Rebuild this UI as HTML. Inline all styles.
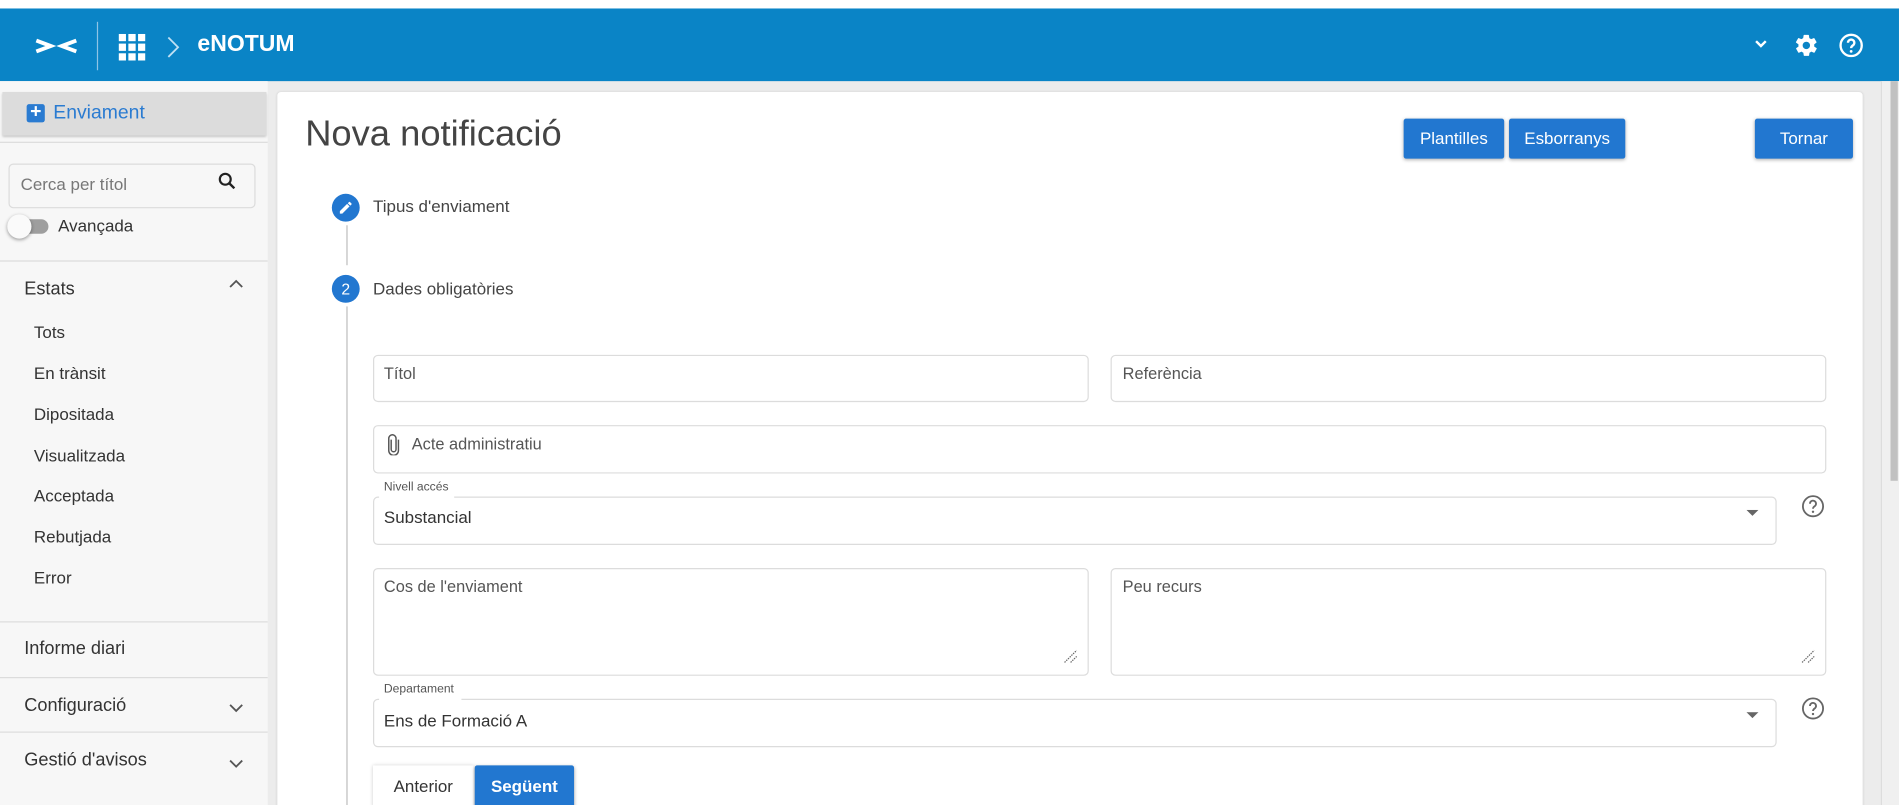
<!DOCTYPE html>
<html><head><meta charset="utf-8"><style>
*{box-sizing:border-box;margin:0;padding:0}
html,body{width:1899px;height:805px;overflow:hidden;background:#fff;font-family:"Liberation Sans",sans-serif}
#w{position:absolute;left:0;top:0;width:1568px;height:665px;transform:scale(1.21109);transform-origin:0 0;background:#ececec;overflow:hidden}
.a{position:absolute}
.t{position:absolute;white-space:nowrap;color:#333}
.box{position:absolute;border:1px solid #dcdcdc;border-radius:4px;background:#fff}
.btn{position:absolute;background:#2277d0;color:#fff;font-size:14px;text-align:center;border-radius:2px;box-shadow:0 1px 3px rgba(0,0,0,.3)}
.side{font-size:14px;color:#333}
.hr{position:absolute;left:0;width:221px;height:1px;background:#dcdcdc}
.lbl{font-size:13.5px;color:#555}
</style></head><body><div id="w">
<div class="a" style="left:0;top:0;width:1568px;height:7px;background:#fff"></div>
<div class="a" style="left:0;top:7px;width:1568px;height:60px;background:#0a84c6"></div>
<svg class="a" style="left:28px;top:30px" width="37" height="16" viewBox="0 0 37 16"><path d="M2 3.5l12 4.5-12 4.5" stroke="#fff" stroke-width="3.2" fill="none"/><path d="M35 3.5L23 8l12 4.5" stroke="#fff" stroke-width="3.2" fill="none"/></svg>
<div class="a" style="left:80px;top:18px;width:1px;height:40px;background:#8fc4e6"></div>
<svg class="a" style="left:98px;top:28px" width="22" height="22" viewBox="0 0 22 22" fill="#fff"><rect x="0" y="0" width="6" height="6"/><rect x="8" y="0" width="6" height="6"/><rect x="16" y="0" width="6" height="6"/><rect x="0" y="8" width="6" height="6"/><rect x="8" y="8" width="6" height="6"/><rect x="16" y="8" width="6" height="6"/><rect x="0" y="16" width="6" height="6"/><rect x="8" y="16" width="6" height="6"/><rect x="16" y="16" width="6" height="6"/></svg>
<svg class="a" style="left:137px;top:29px" width="12" height="20"><path d="M2 2l8 8-8 8" stroke="#bfe0f3" stroke-width="1.5" fill="none"/></svg>
<div class="t" style="left:163px;top:26px;color:#fff;font-size:19px;font-weight:bold">eNOTUM</div>
<svg class="a" style="left:1448px;top:32px" width="12" height="10"><path d="M2 2l4 4 4-4" stroke="#fff" stroke-width="2" fill="none"/></svg>
<svg class="a" style="left:1481px;top:27px" width="21" height="21" viewBox="0 0 24 24" fill="#fff"><path d="M19.4 13c.04-.3.06-.6.06-1s-.02-.7-.06-1l2.1-1.6c.2-.15.25-.4.12-.6l-2-3.5c-.12-.2-.37-.3-.6-.2l-2.5 1c-.5-.4-1.1-.7-1.7-1l-.4-2.6c0-.25-.25-.4-.5-.4h-4c-.25 0-.45.15-.5.4l-.4 2.6c-.6.25-1.150.6-1.7 1l-2.5-1c-.23-.1-.48 0-.6.2l-2 3.5c-.13.2-.07.45.12.6L4.6 11c-.04.3-.06.7-.06 1s.02.7.06 1l-2.1 1.6c-.2.15-.25.4-.12.6l2 3.5c.12.2.37.3.6.2l2.5-1c.5.4 1.1.7 1.7 1l.4 2.6c.05.25.25.4.5.4h4c.25 0 .45-.15.5-.4l.4-2.6c.6-.25 1.150-.6 1.7-1l2.5 1c.23.1.48 0 .6-.2l2-3.5c.13-.2.07-.45-.12-.6zM12 15.5a3.5 3.5 0 110-7 3.5 3.5 0 010 7z"/></svg>
<svg class="a" style="left:1518px;top:27px" width="21" height="21" viewBox="0 0 24 24"><circle cx="12" cy="12" r="10" stroke="#fff" stroke-width="2.2" fill="none"/><path d="M9 9.5a3 3 0 115 2.2c-1.2.8-2 1.3-2 2.8" stroke="#fff" stroke-width="2.2" fill="none"/><circle cx="12" cy="17.6" r="1.3" fill="#fff"/></svg>

<div class="a" style="left:0;top:67px;width:221px;height:600px;background:#f7f7f7"></div>
<div class="a" style="left:2px;top:76px;width:218px;height:36px;background:#dcdcdc;box-shadow:0 1px 2px rgba(0,0,0,.25)"></div>
<div class="a" style="left:22px;top:86px;width:15px;height:15px;background:#2a7bd1;border-radius:2px;color:#fff;font-size:16px;line-height:14px;text-align:center;font-weight:bold">+</div>
<div class="t" style="left:44px;top:85px;font-size:16px;color:#2a7bd1">Enviament</div>
<div class="hr" style="top:117px;width:221px"></div>
<div class="box" style="left:7px;top:135px;width:204px;height:37px;background:#f7f7f7"></div>
<div class="t" style="left:17px;top:144px;font-size:14px;color:#777">Cerca per títol</div>
<svg class="a" style="left:180px;top:142px" width="15" height="15"><circle cx="6" cy="6" r="4.5" stroke="#222" stroke-width="1.8" fill="none"/><path d="M9.5 9.5l4 4" stroke="#222" stroke-width="2"/></svg>
<div class="a" style="left:10px;top:181px;width:30px;height:12px;background:#9e9e9e;border-radius:6px"></div>
<div class="a" style="left:6px;top:177px;width:20px;height:20px;background:#fafafa;border-radius:50%;box-shadow:0 1px 3px rgba(0,0,0,.4)"></div>
<div class="t side" style="left:48px;top:178px">Avançada</div>
<div class="hr" style="top:215px"></div>
<div class="t side" style="left:20px;top:230px;font-size:15px">Estats</div>
<svg class="a" style="left:189px;top:230px" width="12" height="8"><path d="M1 7l5-5 5 5" stroke="#555" stroke-width="1.5" fill="none"/></svg>
<div class="t side" style="left:28px;top:266px">Tots</div>
<div class="t side" style="left:28px;top:300px">En trànsit</div>
<div class="t side" style="left:28px;top:334px">Dipositada</div>
<div class="t side" style="left:28px;top:368px">Visualitzada</div>
<div class="t side" style="left:28px;top:401px">Acceptada</div>
<div class="t side" style="left:28px;top:435px">Rebutjada</div>
<div class="t side" style="left:28px;top:469px">Error</div>
<div class="hr" style="top:513px"></div>
<div class="t side" style="left:20px;top:527px;font-size:15px">Informe diari</div>
<div class="hr" style="top:559px"></div>
<div class="t side" style="left:20px;top:574px;font-size:15px">Configuració</div>
<svg class="a" style="left:189px;top:581px" width="12" height="8"><path d="M1 1l5 5 5-5" stroke="#555" stroke-width="1.5" fill="none"/></svg>
<div class="hr" style="top:604px"></div>
<div class="t side" style="left:20px;top:619px;font-size:15px">Gestió d'avisos</div>
<svg class="a" style="left:189px;top:627px" width="12" height="8"><path d="M1 1l5 5 5-5" stroke="#555" stroke-width="1.5" fill="none"/></svg>

<div class="a" style="left:229px;top:76px;width:1309px;height:600px;background:#fff;border-radius:3px;box-shadow:0 0 2px rgba(0,0,0,.12)"></div>
<div class="a" style="left:1553px;top:67px;width:15px;height:600px;background:#f0f0f0;border-left:1px solid #ddd"></div>
<div class="a" style="left:1561px;top:67px;width:6px;height:330px;background:#c1c1c1"></div>
<div class="t" style="left:252px;top:94px;font-size:30px;color:#444">Nova notificació</div>
<div class="btn" style="left:1159px;top:98px;width:83px;height:33px;line-height:33px">Plantilles</div>
<div class="btn" style="left:1246px;top:98px;width:96px;height:33px;line-height:33px">Esborranys</div>
<div class="btn" style="left:1449px;top:98px;width:81px;height:33px;line-height:33px">Tornar</div>

<div class="a" style="left:274px;top:160px;width:23px;height:23px;border-radius:50%;background:#2277d0"></div>
<svg class="a" style="left:279px;top:165px" width="13" height="13" viewBox="0 0 24 24" fill="#fff"><path d="M3 17.25V21h3.75L17.8 9.94l-3.75-3.75L3 17.25zM20.7 7.04a1 1 0 000-1.41l-2.34-2.34a1 1 0 00-1.41 0l-1.830 1.83 3.75 3.75 1.83-1.83z"/></svg>
<div class="t lbl" style="left:308px;top:162px;font-size:14px;color:#444">Tipus d'enviament</div>
<div class="a" style="left:286px;top:186px;width:1px;height:33px;background:#bdbdbd"></div>
<div class="a" style="left:274px;top:227px;width:23px;height:23px;border-radius:50%;background:#2277d0;color:#fff;font-size:13px;text-align:center;line-height:23px">2</div>
<div class="t lbl" style="left:308px;top:230px;font-size:14px;color:#444">Dades obligatòries</div>
<div class="a" style="left:286px;top:253px;width:1px;height:420px;background:#bdbdbd"></div>

<div class="box" style="left:308px;top:293px;width:591px;height:39px"></div>
<div class="t lbl" style="left:317px;top:301px">Títol</div>
<div class="box" style="left:917px;top:293px;width:591px;height:39px"></div>
<div class="t lbl" style="left:927px;top:301px">Referència</div>
<div class="box" style="left:308px;top:351px;width:1200px;height:40px"></div>
<svg class="a" style="left:320px;top:358px" width="10" height="18"><path d="M3 5v8a2 2 0 004 0V4a3 3 0 00-6 0v10a4 4 0 008 0V5" stroke="#555" stroke-width="1.2" fill="none"/></svg>
<div class="t lbl" style="left:340px;top:359px">Acte administratiu</div>
<div class="box" style="left:308px;top:410px;width:1159px;height:40px"></div>
<div class="a" style="left:313px;top:404px;width:62px;height:8px;background:#fff"></div>
<div class="t" style="left:317px;top:397px;font-size:10px;color:#555">Nivell accés</div>
<div class="t" style="left:317px;top:419px;font-size:14px;color:#333">Substancial</div>
<svg class="a" style="left:1442px;top:421px" width="10" height="6"><path d="M0 0h10L5 5z" fill="#666"/></svg>
<svg class="a" style="left:1487px;top:408px" width="20" height="20" viewBox="0 0 24 24"><circle cx="12" cy="12" r="10" stroke="#666" stroke-width="1.8" fill="none"/><path d="M9 9.5a3 3 0 115 2.2c-1.2.8-2 1.3-2 2.8" stroke="#666" stroke-width="1.8" fill="none"/><circle cx="12" cy="17.5" r="1.2" fill="#666"/></svg>
<div class="box" style="left:308px;top:469px;width:591px;height:89px"></div>
<div class="t lbl" style="left:317px;top:477px">Cos de l'enviament</div>
<div class="box" style="left:917px;top:469px;width:591px;height:89px"></div>
<div class="t lbl" style="left:927px;top:477px">Peu recurs</div>
<svg class="a" style="left:878px;top:536px" width="12" height="12"><path d="M1 11L11 1M6 11l5-5" stroke="#666" stroke-width="1" stroke-dasharray="1.2 .8"/></svg>
<svg class="a" style="left:1487px;top:536px" width="12" height="12"><path d="M1 11L11 1M6 11l5-5" stroke="#666" stroke-width="1" stroke-dasharray="1.2 .8"/></svg>
<div class="box" style="left:308px;top:577px;width:1159px;height:40px"></div>
<div class="a" style="left:313px;top:571px;width:68px;height:8px;background:#fff"></div>
<div class="t" style="left:317px;top:564px;font-size:10px;color:#555">Departament</div>
<div class="t" style="left:317px;top:587px;font-size:14px;color:#333">Ens de Formació A</div>
<svg class="a" style="left:1442px;top:588px" width="10" height="6"><path d="M0 0h10L5 5z" fill="#666"/></svg>
<svg class="a" style="left:1487px;top:575px" width="20" height="20" viewBox="0 0 24 24"><circle cx="12" cy="12" r="10" stroke="#666" stroke-width="1.8" fill="none"/><path d="M9 9.5a3 3 0 115 2.2c-1.2.8-2 1.3-2 2.8" stroke="#666" stroke-width="1.8" fill="none"/><circle cx="12" cy="17.5" r="1.2" fill="#666"/></svg>
<div class="a" style="left:308px;top:632px;width:83px;height:35px;background:#fff;box-shadow:0 0 3px rgba(0,0,0,.2);color:#333;font-size:14px;text-align:center;line-height:34px">Anterior</div>
<div class="btn" style="left:392px;top:632px;width:82px;height:35px;line-height:34px;font-weight:bold">Següent</div>
</div></body></html>
